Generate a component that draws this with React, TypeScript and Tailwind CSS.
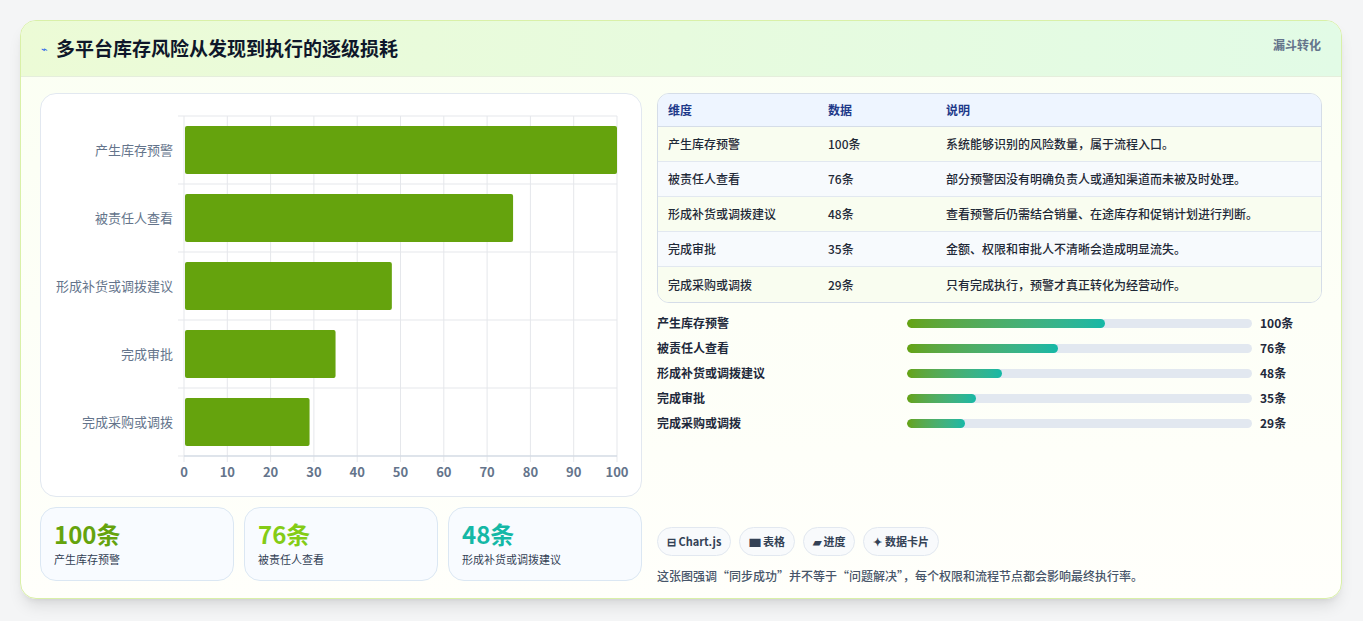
import React from "react";

const rows = [
  { n: "产生库存预警", v: 100, d: "系统能够识别的风险数量，属于流程入口。" },
  { n: "被责任人查看", v: 76, d: "部分预警因没有明确负责人或通知渠道而未被及时处理。" },
  { n: "形成补货或调拨建议", v: 48, d: "查看预警后仍需结合销量、在途库存和促销计划进行判断。" },
  { n: "完成审批", v: 35, d: "金额、权限和审批人不清晰会造成明显流失。" },
  { n: "完成采购或调拨", v: 29, d: "只有完成执行，预警才真正转化为经营动作。" },
];

function Chart() {
  const x0 = 143, x1 = 576, y0 = 22, y1 = 362;
  const w = x1 - x0, band = (y1 - y0) / 5;
  return (
    <svg width="600" height="400" className="block">
      {Array.from({ length: 11 }).map((_, i) => (
        <line key={i} x1={x0 + (w * i) / 10} x2={x0 + (w * i) / 10} y1={y0} y2={y1 + 6} stroke="#e5e7eb" />
      ))}
      {Array.from({ length: 6 }).map((_, i) => (
        <line key={i} x1={x0 - 6} x2={x1} y1={y0 + band * i} y2={y0 + band * i} stroke="#e5e7eb" />
      ))}
      <line x1={x0} x2={x1} y1={y1} y2={y1} stroke="#cbd5e1" />
      {rows.map((r, i) => (
        <g key={i}>
          <rect x={x0 + 1} y={y0 + band * i + 10} width={(w * r.v) / 100 - 1} height={48} rx={2} fill="#65a30d" />
          <text x={x0 - 11} y={y0 + band * i + band / 2 + 5} textAnchor="end" fontSize="13" fill="#64748b">{r.n}</text>
        </g>
      ))}
      {Array.from({ length: 11 }).map((_, i) => (
        <text key={i} x={x0 + (w * i) / 10} y={383} textAnchor="middle" fontSize="13" fontWeight="bold" fill="#64748b">{i * 10}</text>
      ))}
    </svg>
  );
}

export default function App() {
  const font = { fontFamily: '"Noto Sans CJK SC", "Noto Sans", sans-serif' };
  return (
    <div className="w-[1363px] h-[621px] bg-[#f4f5f6] pt-5 pl-5" style={font}>
      <div className="w-[1322px] h-[579px] rounded-2xl border border-[#d9f0a8] bg-gradient-to-b from-[#fbfff3] to-[#fffffb] shadow-lg overflow-hidden flex flex-col">
        <div className="h-[56px] shrink-0 flex items-center justify-between px-5 bg-gradient-to-r from-[#ecfbd6] to-[#e2fbe6] border-b border-[#e5eedc]">
          <div className="flex items-center gap-2">
            <span className="text-[#2563eb] text-[11px]">⌁</span>
            <span className="text-[19px] font-bold text-[#0f172a]">多平台库存风险从发现到执行的逐级损耗</span>
          </div>
          <span className="text-xs font-bold text-[#64748b] self-start mt-[16px]">漏斗转化</span>
        </div>
        <div className="flex gap-[15px] px-[19px] pt-4">
          <div className="w-[603px] flex flex-col gap-[10px]">
            <div className="h-[404px] rounded-2xl border border-[#e2e8f0] bg-white">
              <Chart />
            </div>
            <div className="grid grid-cols-3 gap-[10px]">
              {[["100条", "text-[#65a30d]", "产生库存预警"], ["76条", "text-[#84cc16]", "被责任人查看"], ["48条", "text-[#14b8a6]", "形成补货或调拨建议"]].map(([v, c, l]) => (
                <div key={l} className="h-[74px] rounded-2xl border border-[#dbe7f3] bg-[#f8fbff] px-[13px] pt-[10px]">
                  <div className={`text-[24px] font-bold leading-8 ${c}`}>{v}</div>
                  <div className="text-[11px] text-[#334155] mt-[1px]">{l}</div>
                </div>
              ))}
            </div>
          </div>
          <div className="w-[667px] flex flex-col">
            <div className="rounded-xl border border-[#d5dde8] overflow-hidden text-xs">
              <div className="h-[33px] bg-[#eef5ff] flex items-center font-bold text-[#1e3a8a] border-b border-[#d5dde8]">
                <div className="w-[170px] pl-[10px]">维度</div>
                <div className="w-[118px]">数据</div>
                <div>说明</div>
              </div>
              {rows.map((r, i) => (
                <div key={i} className={`h-[35px] flex items-center font-medium text-[#1f2937] ${i < 4 ? "border-b border-[#e2e8f0]" : ""} ${i % 2 ? "bg-[#f7fafd]" : "bg-[#f9fdf0]"}`}>
                  <div className="w-[170px] pl-[10px]">{r.n}</div>
                  <div className="w-[118px]">{r.v}条</div>
                  <div>{r.d}</div>
                </div>
              ))}
            </div>
            <div className="mt-[12px] flex flex-col gap-[9px]">
              {rows.map((r, i) => (
                <div key={i} className="h-4 flex items-center text-xs font-bold text-[#1e293b]">
                  <div className="w-[250px]">{r.n}</div>
                  <div className="w-[345px] h-[9px] rounded-full bg-[#e2e8f0] overflow-hidden">
                    <div className="h-full rounded-full bg-gradient-to-r from-[#65a30d] to-[#14b8a6]" style={{ width: `${r.v * 0.575}%` }} />
                  </div>
                  <div className="ml-2">{r.v}条</div>
                </div>
              ))}
            </div>
            <div className="mt-[96px] flex gap-[8px]">
              {["⊟ Chart.js", "▆ 表格", "▰ 进度", "✦ 数据卡片"].map((t) => (
                <span key={t} className="h-[29px] px-[9px] flex items-center rounded-full border border-[#e2e8f0] bg-[#f8fafc] text-[11px] font-bold text-[#334155]">{t}</span>
              ))}
            </div>
            <div className="mt-[12px] text-xs font-medium text-[#475569]">这张图强调“同步成功”并不等于“问题解决”，每个权限和流程节点都会影响最终执行率。</div>
          </div>
        </div>
      </div>
    </div>
  );
}
